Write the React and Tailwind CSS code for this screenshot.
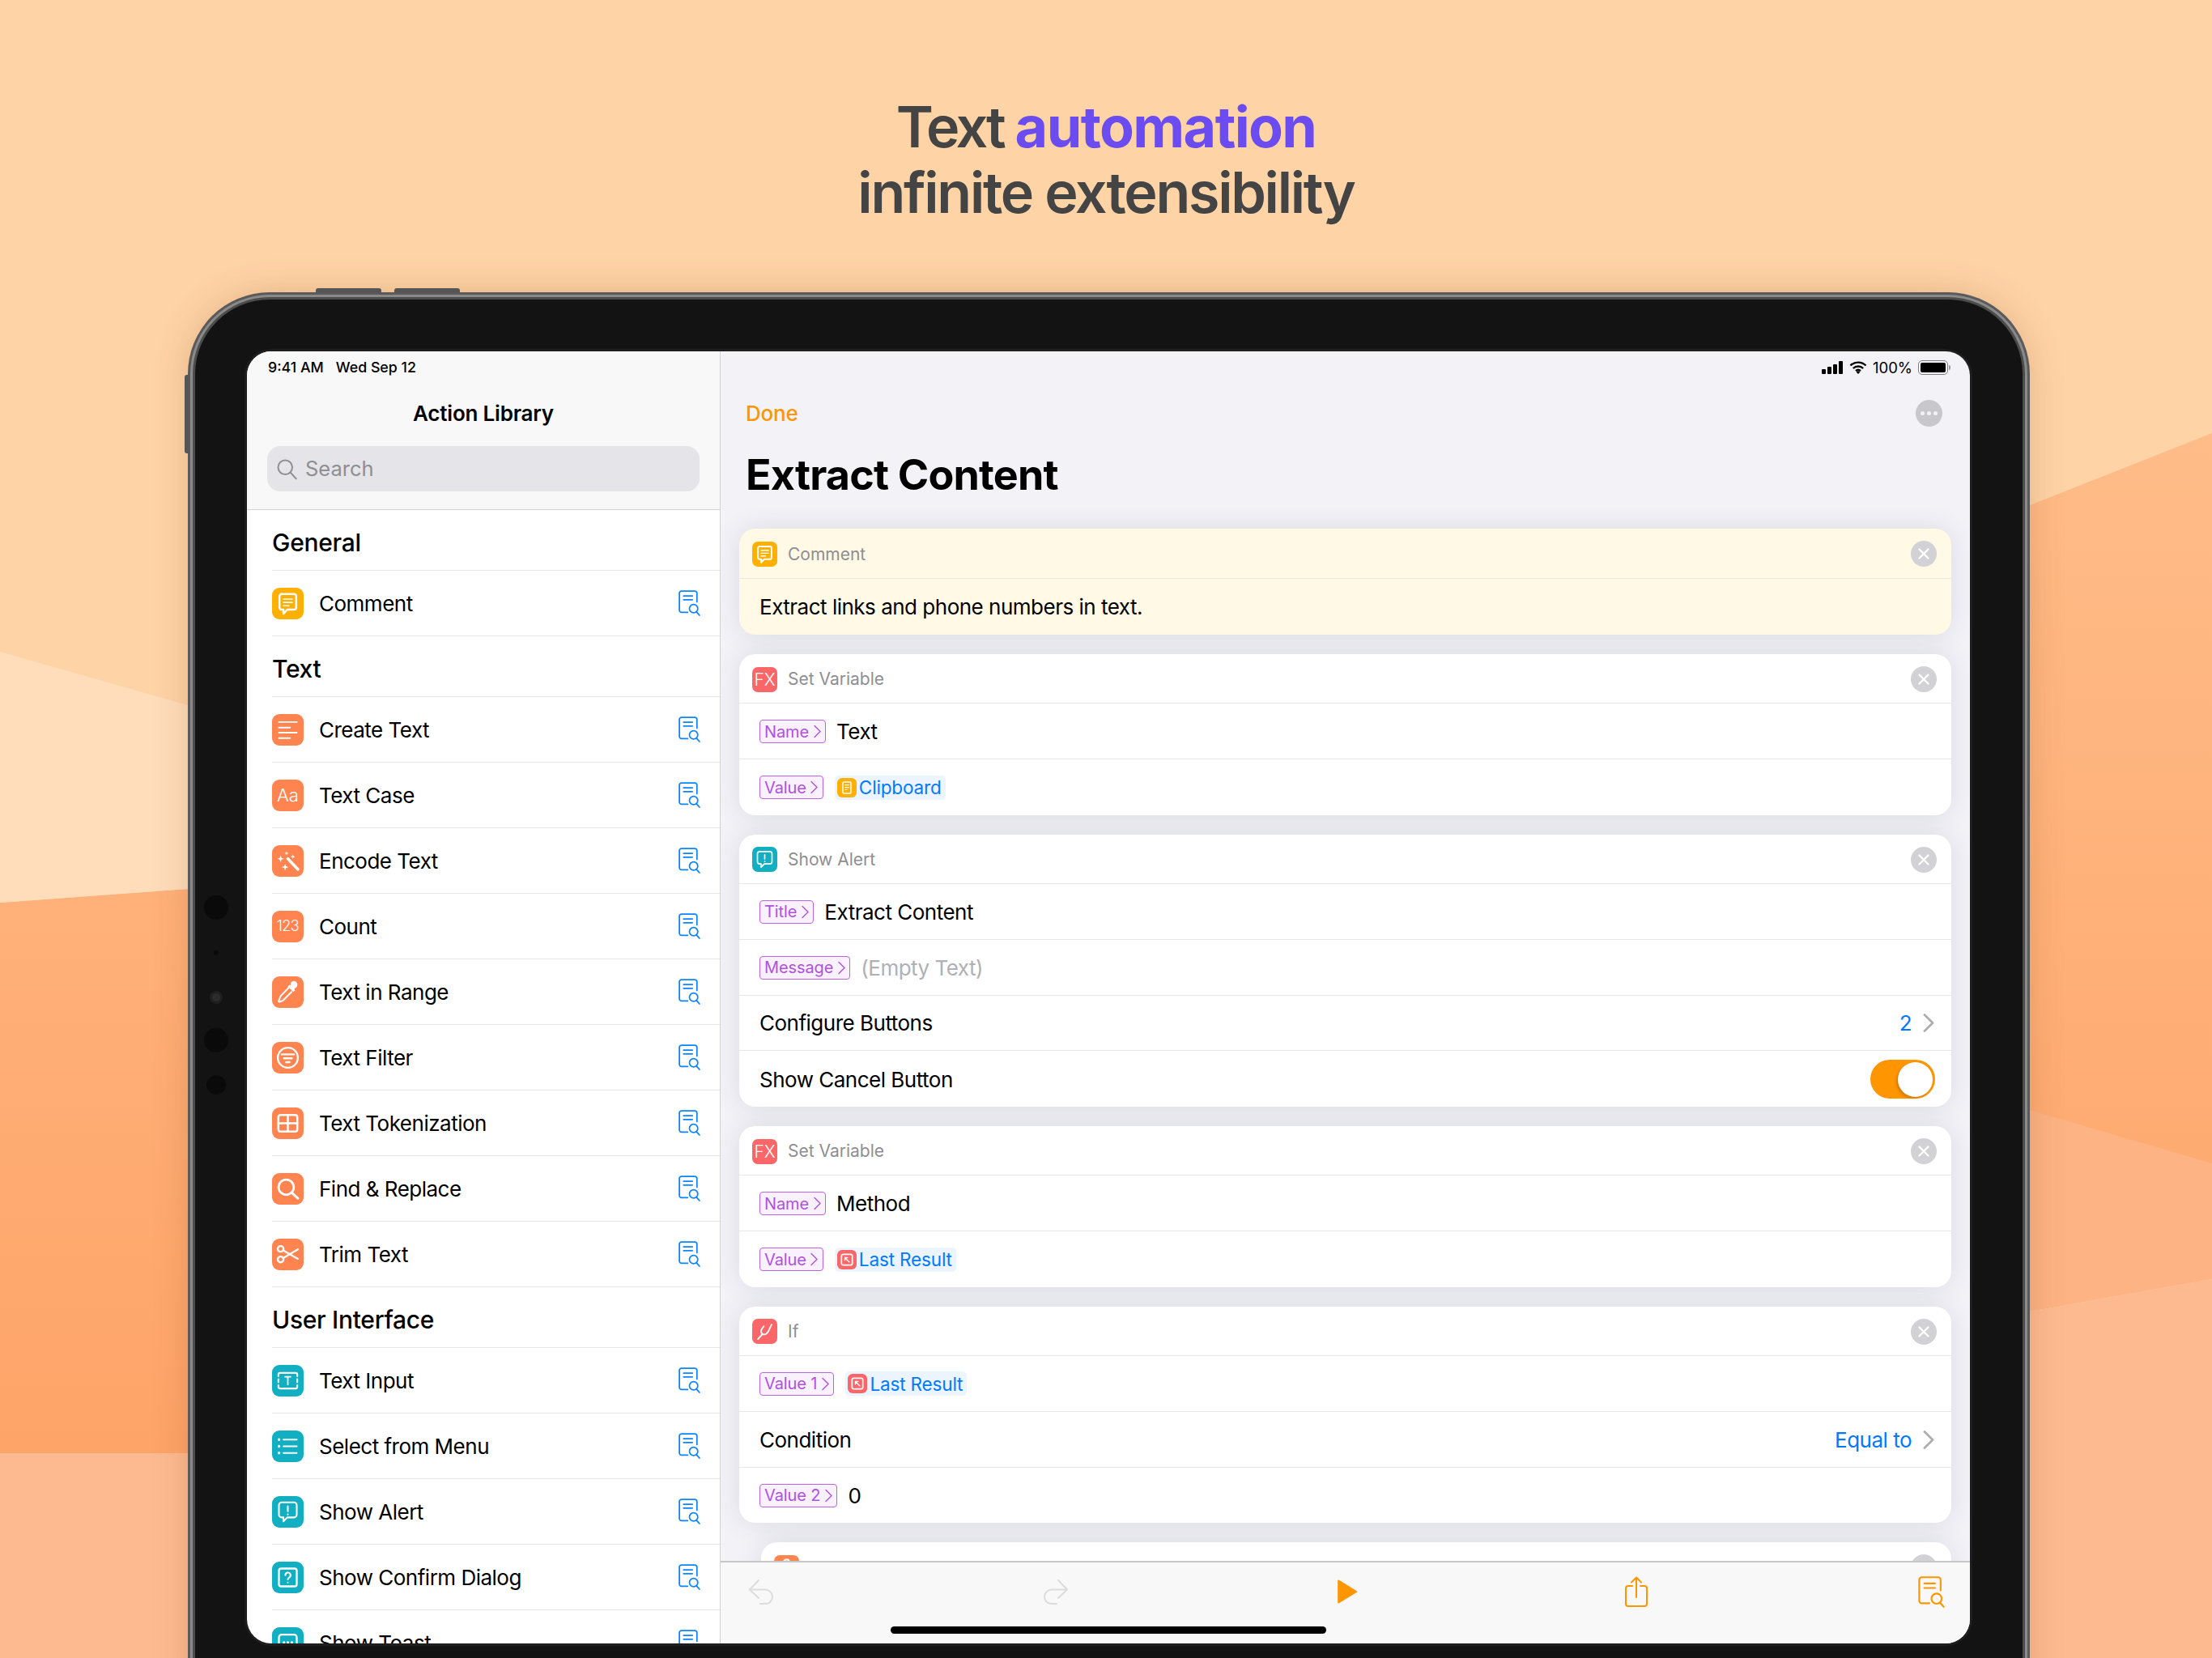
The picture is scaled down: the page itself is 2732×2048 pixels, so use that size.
import React from "react";

const Svg = ({ children, vb = "0 0 24 24", className = "", sw = 1.8, stroke = "#fff" }) => (
  <svg viewBox={vb} className={className} fill="none" stroke={stroke} strokeWidth={sw} strokeLinecap="round" strokeLinejoin="round">
    {children}
  </svg>
);

const ICONS = {
  comment: (
    <>
      <path d="M6.500 3.500h11a2 2 0 0 1 2 2v10a2 2 0 0 1-2 2h-6l-3.500 3.600v-3.600H6.500a2 2 0 0 1-2-2v-10a2 2 0 0 1 2-2z" />
      <path d="M8 8h8M8 11h8M8 14h5" strokeWidth="1.200" />
    </>
  ),
  lines: <path d="M4 5h16M4 10h10M4 14.500h16M4 19.500h10" strokeWidth="1.400" />,
  wand: (
    <>
      <path d="M12 10l9 9.500" strokeWidth="2.600" />
      <path fill="#fff" stroke="none" d="M5.500 7l.8 2.200L8.500 10l-2.200.8L5.500 13l-.8-2.200L2.500 10l2.200-.8zM10.800 3l.5 1.500 1.500.5-1.500.5-.5 1.500-.5-1.500L8.800 5l1.500-.5zM16.500 6l.6 1.600 1.600.6-1.600.6-.6 1.600-.6-1.600-1.600-.6 1.600-.6zM9.500 14.500l.8 2.200 2.200.8-2.200.8-.8 2.200-.8-2.200-2.200-.8 2.200-.8z" />
    </>
  ),
  dropper: (
    <>
      <path fill="#fff" stroke="none" d="M14.500 3.500a3.300 3.300 0 0 1 5.500 3.700l-2.300 2.100.9 1-1.700 1.600-5-5 1.600-1.700 1 .9z" />
      <path d="M12.800 8L5.500 15.500l-1.200 3.300-.8 1.500 1.100.5 3.300-1.500 7.400-7.500" strokeWidth="1.400" />
    </>
  ),
  filter: (
    <>
      <circle cx="12" cy="12" r="9" strokeWidth="1.700" />
      <path d="M6.500 9h11M8.500 12.500h7M10.500 16h3" />
    </>
  ),
  grid: (
    <>
      <rect x="3.500" y="4.500" width="17" height="15" rx="2" />
      <path d="M12 4.500v15M3.500 12h17" />
    </>
  ),
  search: (
    <>
      <circle cx="10.500" cy="10.500" r="6.800" strokeWidth="2" />
      <path d="M15.500 15.500l5.500 5" strokeWidth="2.200" />
    </>
  ),
  scissors: (
    <>
      <circle cx="5.500" cy="7" r="2.600" strokeWidth="1.700" />
      <circle cx="5.500" cy="16.500" r="2.600" strokeWidth="1.700" />
      <path d="M7.800 8.300L21 16M7.800 15.200L21 7.500" strokeWidth="1.700" />
    </>
  ),
  input: (
    <>
      <path d="M3.500 8V6.500a1.500 1.500 0 0 1 1.500-1.500h14a1.500 1.500 0 0 1 1.500 1.500V8M3.500 10.500v3M20.500 10.500v3M3.500 16v1.500a1.500 1.500 0 0 0 1.500 1.500h14a1.500 1.500 0 0 0 1.500-1.500V16" strokeWidth="1.500" />
      <path d="M9.500 8.500h5M12 8.500v7" strokeWidth="1.300" />
    </>
  ),
  menu: (
    <>
      <path d="M8 6h12M8 12h12M8 18h12" strokeWidth="1.400" />
      <path d="M4 6h.1M4 12h.1M4 18h.1" strokeWidth="2.400" />
    </>
  ),
  alert: (
    <>
      <path d="M6.500 3.500h11a2.500 2.500 0 0 1 2.500 2.500v8.500a2.500 2.500 0 0 1-2.500 2.500h-6l-3.500 3.500V17H6.500A2.500 2.500 0 0 1 4 14.500V6a2.500 2.500 0 0 1 2.500-2.500z" strokeWidth="1.500" />
      <path d="M12 7v4.500M12 14.200v.1" strokeWidth="1.500" />
    </>
  ),
  question: (
    <>
      <rect x="4" y="4" width="16" height="16" rx="2" strokeWidth="1.700" />
      <path d="M9.800 10a2.300 2.300 0 1 1 3.400 2c-.8.500-1.200 1-1.200 1.800M12 16.500v.1" strokeWidth="1.500" />
    </>
  ),
  toast: (
    <>
      <rect x="4" y="4.500" width="16" height="14" rx="2.500" strokeWidth="1.700" />
      <path d="M8.500 11.500h.1M12 11.500h.1M15.500 11.500h.1" strokeWidth="2.200" />
    </>
  ),
  fork: (
    <>
      <path d="M4.500 20.500l5-5.500" strokeWidth="1.800" />
      <path d="M9.500 15c-2.500-2-1.500-4.500 0-6.500l1.500-2M9.500 15c3 1.500 5-.5 6.500-3l3.500-7.500" strokeWidth="1.600" />
    </>
  ),
  result: (
    <>
      <rect x="4" y="4" width="16" height="16" rx="2.500" strokeWidth="2" />
      <path d="M9 9l6.500 6.500M9 9v4M9 9h4" strokeWidth="1.600" />
    </>
  ),
  clip: (
    <>
      <rect x="6" y="3.500" width="12" height="17" rx="2" strokeWidth="1.800" />
      <path d="M9 8h6M9 11.500h6M9 15h3" strokeWidth="1.400" />
    </>
  ),
  dot: <circle cx="12" cy="6" r="3" strokeWidth="2" />,
};

const Glyph = ({ name, className }) => <Svg className={className}>{ICONS[name]}</Svg>;

const DocSearch = ({ className, stroke = "#0a84ff" }) => (
  <svg viewBox="0 0 26 31" className={className} fill="none" stroke={stroke} strokeWidth="1.700" strokeLinecap="round" strokeLinejoin="round">
    <path d="M11 26.500H3.500A2.500 2.500 0 0 1 1 24V3.500A2.500 2.500 0 0 1 3.500 1h16A2.500 2.500 0 0 1 22 3.500V14" />
    <path d="M6 7h10.500M6 11.500h10.500" />
    <circle cx="18" cy="22" r="5" />
    <path d="M21.500 26l3.500 4" />
  </svg>
);

const Chevron = ({ className, stroke = "#af52de", sw = 1.400 }) => (
  <svg viewBox="0 0 9 16" className={className} fill="none" stroke={stroke} strokeWidth={sw} strokeLinecap="round" strokeLinejoin="round">
    <path d="M1 1l7 7-7 7" />
  </svg>
);

const groups = [
  { title: "General", rows: [["Comment", "#ffb000", "comment"]] },
  {
    title: "Text",
    rows: [
      ["Create Text", "#ff8450", "lines"],
      ["Text Case", "#ff8450", "Aa"],
      ["Encode Text", "#ff8450", "wand"],
      ["Count", "#ff8450", "123"],
      ["Text in Range", "#ff8450", "dropper"],
      ["Text Filter", "#ff8450", "filter"],
      ["Text Tokenization", "#ff8450", "grid"],
      ["Find & Replace", "#ff8450", "search"],
      ["Trim Text", "#ff8450", "scissors"],
    ],
  },
  {
    title: "User Interface",
    rows: [
      ["Text Input", "#12afc2", "input"],
      ["Select from Menu", "#12afc2", "menu"],
      ["Show Alert", "#12afc2", "alert"],
      ["Show Confirm Dialog", "#12afc2", "question"],
      ["Show Toast", "#12afc2", "toast"],
    ],
  },
];

const LibIcon = ({ color, name }) => (
  <div style={{ backgroundColor: color }} className="w-[39px] h-[39px] rounded-[9px] flex items-center justify-center text-white shrink-0">
    {name === "Aa" ? (
      <span className="text-[22px] font-light leading-none">Aa</span>
    ) : name === "123" ? (
      <span className="text-[18px] font-light leading-none tracking-[-0.5px]">123</span>
    ) : (
      <Glyph name={name} className="w-[33px] h-[33px]" />
    )}
  </div>
);

const Sidebar = () => (
  <div className="w-[585px] shrink-0 flex flex-col bg-white border-r border-[#d1d1d6] h-full overflow-hidden">
    <div className="bg-[#f8f8f8] border-b border-[#d1d1d6] h-[196px] shrink-0 flex flex-col">
      <div className="h-[40px] flex items-center pl-[26px] gap-[15px] text-[17.800px] font-medium text-black">
        <span>9:41 AM</span>
        <span>Wed Sep 12</span>
      </div>
      <div className="h-[72px] flex items-center justify-center text-[26px] font-semibold text-black tracking-[-0.2px]">Action Library</div>
      <div className="mt-[5px] ml-[25px] mr-[25px] h-[56px] rounded-[16px] bg-[#e4e4e9] flex items-center pl-[10px] gap-[9px] text-[25.500px] text-[#8e8e93]">
        <Svg className="w-[28px] h-[28px]" stroke="#8e8e93" sw={1.700}>
          <circle cx="10.500" cy="10.500" r="7.500" />
          <path d="M16 16l6 6.500" />
        </Svg>
        <span>Search</span>
      </div>
    </div>
    <div className="flex-1 min-h-0 overflow-hidden">
      {groups.map((g) => (
        <div key={g.title}>
          <div className="h-[75px] ml-[31px] border-b border-[#e5e5ea] flex items-center pt-[6px] text-[30px] font-medium text-black tracking-[-0.3px]">{g.title}</div>
          {g.rows.map(([label, color, icon]) => (
            <div key={label} className="h-[81px] ml-[31px] border-b border-[#e5e5ea] flex items-center">
              <LibIcon color={color} name={icon} />
              <span className="ml-[19px] pt-[1px] text-[26px] text-black flex-1 tracking-[-0.5px]">{label}</span>
              <DocSearch className="w-[27px] h-[32px] mr-[24px]" />
            </div>
          ))}
        </div>
      ))}
    </div>
  </div>
);

const CardIcon = ({ color, name }) => (
  <div style={{ backgroundColor: color }} className="w-[31px] h-[31px] rounded-[7px] flex items-center justify-center text-white shrink-0">
    {name === "FX" ? <span className="text-[21px] leading-none font-light">FX</span> : <Glyph name={name} className="w-[27px] h-[27px]" />}
  </div>
);

const Close = () => (
  <div className="w-[32px] h-[32px] rounded-full bg-[#d1d1d6] flex items-center justify-center mr-[18px]">
    <Svg className="w-[22px] h-[22px]" sw={2.600}>
      <path d="M6 6l12 12M18 6L6 18" />
    </Svg>
  </div>
);

const Card = ({ color, icon, title, children, tint = false, extra = "" }) => (
  <div className={`shrink-0 rounded-[20px] overflow-hidden shadow-[0_0_32px_rgba(60,60,80,0.12)] ${tint ? "bg-[#fff9e6]" : "bg-white"} ${extra}`}>
    <div className={`h-[61.500px] flex items-center pl-[16px] pt-[2px] border-b ${tint ? "border-[#eee9dd]" : "border-[#e5e5ea]"}`}>
      <CardIcon color={color} name={icon} />
      <span className="ml-[13px] text-[21px] text-[#8e8e93] flex-1">{title}</span>
      <Close />
    </div>
    {children}
  </div>
);

const Row = ({ children, last = false, h = "h-[68.750px]" }) => (
  <div className={`${h} flex items-center pl-[25px] pr-[21px] pt-[1px] ${last ? "" : "border-b border-[#e5e5ea]"}`}>{children}</div>
);

const Tag = ({ children }) => (
  <div className="h-[29px] rounded-[4px] border-[1.500px] border-[#bd63e6] bg-[#f9f1fe] flex items-center pl-[5px] pr-[5.500px] gap-[5.500px] text-[20px] leading-none tracking-[-0.1px] text-[#af52de] shrink-0">
    <span>{children}</span>
    <Chevron className="w-[9px] h-[17px]" />
  </div>
);

const Val = ({ children, muted = false }) => (
  <span className={`ml-[13px] text-[26px] tracking-[-0.5px] ${muted ? "text-[#b0b0b5]" : "text-black"}`}>{children}</span>
);

const Pill = ({ color, icon, children }) => (
  <div className="ml-[14px] h-[30px] rounded-[5px] bg-[#ecf5ff] flex items-center pl-[3px] pr-[5px] gap-[3px] text-[22.500px] tracking-[-0.15px] text-[#007aff]">
    <div style={{ backgroundColor: color }} className="w-[24px] h-[24px] rounded-[6px] flex items-center justify-center">
      <Glyph name={icon} className="w-[20px] h-[20px]" />
    </div>
    <span>{children}</span>
  </div>
);

const Plain = ({ children }) => <span className="flex-1 text-[26px] text-black tracking-[-0.5px]">{children}</span>;

const Disclose = ({ children }) => (
  <>
    <span className="text-[26px] text-[#007aff] tracking-[-0.5px]">{children}</span>
    <Chevron className="ml-[14px] w-[14px] h-[23px]" stroke="#aeaeb2" sw={1.900} />
  </>
);

const Main = () => (
  <div className="flex-1 min-w-0 flex flex-col bg-[#f2f2f7] h-full overflow-hidden">
    <div className="h-[40px] shrink-0 flex items-center justify-end pr-[24px] text-[18.500px] text-black">
      <div className="flex items-end gap-[2.500px] h-[16px]">
        <div className="w-[4.500px] h-[6px] rounded-[1px] bg-black" />
        <div className="w-[4.500px] h-[9px] rounded-[1px] bg-black" />
        <div className="w-[4.500px] h-[12.500px] rounded-[1px] bg-black" />
        <div className="w-[4.500px] h-[16px] rounded-[1px] bg-black" />
      </div>
      <svg viewBox="0 0 22 16" className="ml-[8px] w-[22px] h-[16px]" fill="none" stroke="#000" strokeWidth="2.400">
        <path d="M1.500 5.500a13.500 13.500 0 0 1 19 0M4.800 9a9 9 0 0 1 12.400 0M8 12.200a4.500 4.500 0 0 1 6 0" />
        <path d="M11 16l-2.400-2.500a3.400 3.400 0 0 1 4.800 0z" fill="#000" stroke="none" />
      </svg>
      <span className="ml-[7px] leading-none">100%</span>
      <div className="ml-[7px] w-[37px] h-[18px] rounded-[5px] border-[1.500px] border-[#7c7c7c] p-[2px]">
        <div className="w-full h-full rounded-[2px] bg-black" />
      </div>
      <div className="ml-[1px] w-[2px] h-[6px] rounded-r-[2px] bg-[#9a9a9a]" />
    </div>
    <div className="h-[72px] shrink-0 flex items-center justify-between pl-[31px] pr-[34px]">
      <span className="text-[26px] font-medium text-[#ff9500] tracking-[-0.2px]">Done</span>
      <div className="w-[33px] h-[33px] rounded-full bg-[#c7c7cc] flex items-center justify-center gap-[3px]">
        <div className="w-[5px] h-[5px] rounded-full bg-[#f2f2f7]" />
        <div className="w-[5px] h-[5px] rounded-full bg-[#f2f2f7]" />
        <div className="w-[5px] h-[5px] rounded-full bg-[#f2f2f7]" />
      </div>
    </div>
    <div className="h-[82px] shrink-0 flex items-center pl-[31px] text-[52px] font-bold text-black tracking-[-0.800px] leading-none">Extract Content</div>
    <div className="flex-1 min-h-0 overflow-hidden px-[23px] pt-[25px] flex flex-col gap-[23.750px]">
      <Card color="#ffb000" icon="comment" title="Comment" tint>
        <Row last h="h-[69.500px]">
          <Plain>Extract links and phone numbers in text.</Plain>
        </Row>
      </Card>
      <Card color="#fb6669" icon="FX" title="Set Variable">
        <Row>
          <Tag>Name</Tag>
          <Val>Text</Val>
        </Row>
        <Row last>
          <Tag>Value</Tag>
          <Pill color="#ffb000" icon="clip">Clipboard</Pill>
        </Row>
      </Card>
      <Card color="#12afc2" icon="alert" title="Show Alert">
        <Row>
          <Tag>Title</Tag>
          <Val>Extract Content</Val>
        </Row>
        <Row>
          <Tag>Message</Tag>
          <Val muted>(Empty Text)</Val>
        </Row>
        <Row>
          <Plain>Configure Buttons</Plain>
          <Disclose>2</Disclose>
        </Row>
        <Row last>
          <Plain>Show Cancel Button</Plain>
          <div className="w-[80px] h-[48px] rounded-full bg-[#ff9500] flex items-center justify-end pr-[3px] -mr-[1px]">
            <div className="w-[43px] h-[43px] rounded-full bg-white shadow-[-2px_2px_3px_rgba(120,60,0,0.3)]" />
          </div>
        </Row>
      </Card>
      <Card color="#fb6669" icon="FX" title="Set Variable">
        <Row>
          <Tag>Name</Tag>
          <Val>Method</Val>
        </Row>
        <Row last>
          <Tag>Value</Tag>
          <Pill color="#fb6669" icon="result">Last Result</Pill>
        </Row>
      </Card>
      <Card color="#fb6669" icon="fork" title="If">
        <Row>
          <Tag>Value 1</Tag>
          <Pill color="#fb6669" icon="result">Last Result</Pill>
        </Row>
        <Row>
          <Plain>Condition</Plain>
          <Disclose>Equal to</Disclose>
        </Row>
        <Row last>
          <Tag>Value 2</Tag>
          <Val>0</Val>
        </Row>
      </Card>
      <Card color="#ff8450" icon="dot" title="" extra="ml-[27px]" />
    </div>
    <div className="relative h-[102px] shrink-0 bg-[#f8f8f8] border-t-2 border-[#c6c6c8] flex items-center pl-[35px] pb-[28px]">
      <div className="flex items-center">
        <svg viewBox="0 0 31 31" className="w-[31px] h-[31px]" fill="none" stroke="#dcdcde" strokeWidth="2" strokeLinecap="round" strokeLinejoin="round">
          <path d="M12 1L1 12.500 12 23M1 12.500h19a9 9 0 0 1 9 9 8.500 8.500 0 0 1-9 8.500h-6" />
        </svg>
        <svg viewBox="0 0 31 31" className="ml-[332px] w-[31px] h-[31px]" fill="none" stroke="#dcdcde" strokeWidth="2" strokeLinecap="round" strokeLinejoin="round">
          <path d="M19 1l11 11.500L19 23M30 12.500H11a9 9 0 0 0-9 9 8.500 8.500 0 0 0 9 8.500h6" />
        </svg>
        <svg viewBox="0 0 24 28" className="ml-[332px] w-[26px] h-[30px]" fill="#ff9500">
          <path d="M1 1.500a1 1 0 0 1 1.500-.8l20.500 12.500a1 1 0 0 1 0 1.600L2.500 27.300a1 1 0 0 1-1.500-.8z" />
        </svg>
        <svg viewBox="0 0 28 38" className="ml-[330px] w-[28px] h-[38px]" fill="none" stroke="#ff9500" strokeWidth="2" strokeLinecap="round" strokeLinejoin="round">
          <path d="M9 12H4a3 3 0 0 0-3 3v19a3 3 0 0 0 3 3h20a3 3 0 0 0 3-3V15a3 3 0 0 0-3-3h-5" />
          <path d="M14 26V1.500M8 7.500l6-6 6 6" />
        </svg>
        <DocSearch className="ml-[334px] w-[33px] h-[39px]" stroke="#ff9500" />
      </div>
      <div className="absolute left-[210px] bottom-[12px] w-[538px] h-[9px] rounded-full bg-black" />
    </div>
  </div>
);

const Holes = () => (
  <>
    <div className="absolute left-[11px] top-[736px] w-[30px] h-[30px] rounded-full bg-[#0a0a0a]" />
    <div className="absolute left-[23px] top-[804px] w-[6px] h-[6px] rounded-full bg-[#0a0a0a]" />
    <div className="absolute left-[18px] top-[854px] w-[16px] h-[16px] rounded-full bg-[#2c2c2c] border-[3px] border-[#1f1f1f]" />
    <div className="absolute left-[11px] top-[900px] w-[30px] h-[30px] rounded-full bg-[#0a0a0a]" />
    <div className="absolute left-[14px] top-[958px] w-[24px] h-[24px] rounded-full bg-[#0a0a0a]" />
  </>
);

export default function App() {
  return (
    <div className="relative w-[2732px] h-[2048px] overflow-hidden bg-[#fed3a6] [font-family:Inter,sans-serif]">
      <svg className="absolute inset-0 w-full h-full" viewBox="0 0 2732 2048">
        <defs>
          <linearGradient id="mid" x1="0" y1="0" x2="0" y2="1">
            <stop offset="0" stopColor="#ffbc88" />
            <stop offset="1" stopColor="#fea468" />
          </linearGradient>
        </defs>
        <polygon points="0,1115 232,1098 2507,624 2732,535 2732,1437 2507,1620 232,1795 0,1795" fill="url(#mid)" />
        <polygon points="0,805 232,871 232,1098 0,1115" fill="#ffddba" />
        <polygon points="2507,1371 2732,1437 2732,1580 2507,1620" fill="#fdb384" />
        <polygon points="0,1795 232,1795 2507,1620 2732,1580 2732,2048 0,2048" fill="#fdba90" />
      </svg>

      <div className="relative flex flex-col items-center pt-[116px] text-[70px] leading-[81px] font-semibold text-[#444444]">
        <div>
          <span className="tracking-[-3.400px]">Text </span>
          <span className="font-bold tracking-[-1.600px] text-[#6a4cf0]">automation</span>
        </div>
        <div className="tracking-[-2.270px]">infinite extensibility</div>
      </div>

      <div className="relative mt-[92px] ml-[241px] w-[2257px] h-[1780px] rounded-[92px] bg-[#131313] shadow-[0_0_0_3px_#4c4c4c,0_0_0_6px_#8a8a8a,0_0_0_9px_#5a5a5a,0_0_50px_rgba(130,70,20,0.3)] p-[64px]">
        <Holes />
        <div className="w-[2128px] h-[1596px] rounded-[30px] shadow-[0_0_0_3px_#1e1e1e] overflow-hidden flex">
          <Sidebar />
          <Main />
        </div>
        <div className="absolute left-[149px] -top-[14px] w-[81px] h-[5px] rounded-t-[3px] bg-[#555]" />
        <div className="absolute left-[246px] -top-[14px] w-[81px] h-[5px] rounded-t-[3px] bg-[#555]" />
        <div className="absolute -left-[13px] top-[93px] w-[5px] h-[97px] rounded-l-[3px] bg-[#555]" />
      </div>
    </div>
  );
}
